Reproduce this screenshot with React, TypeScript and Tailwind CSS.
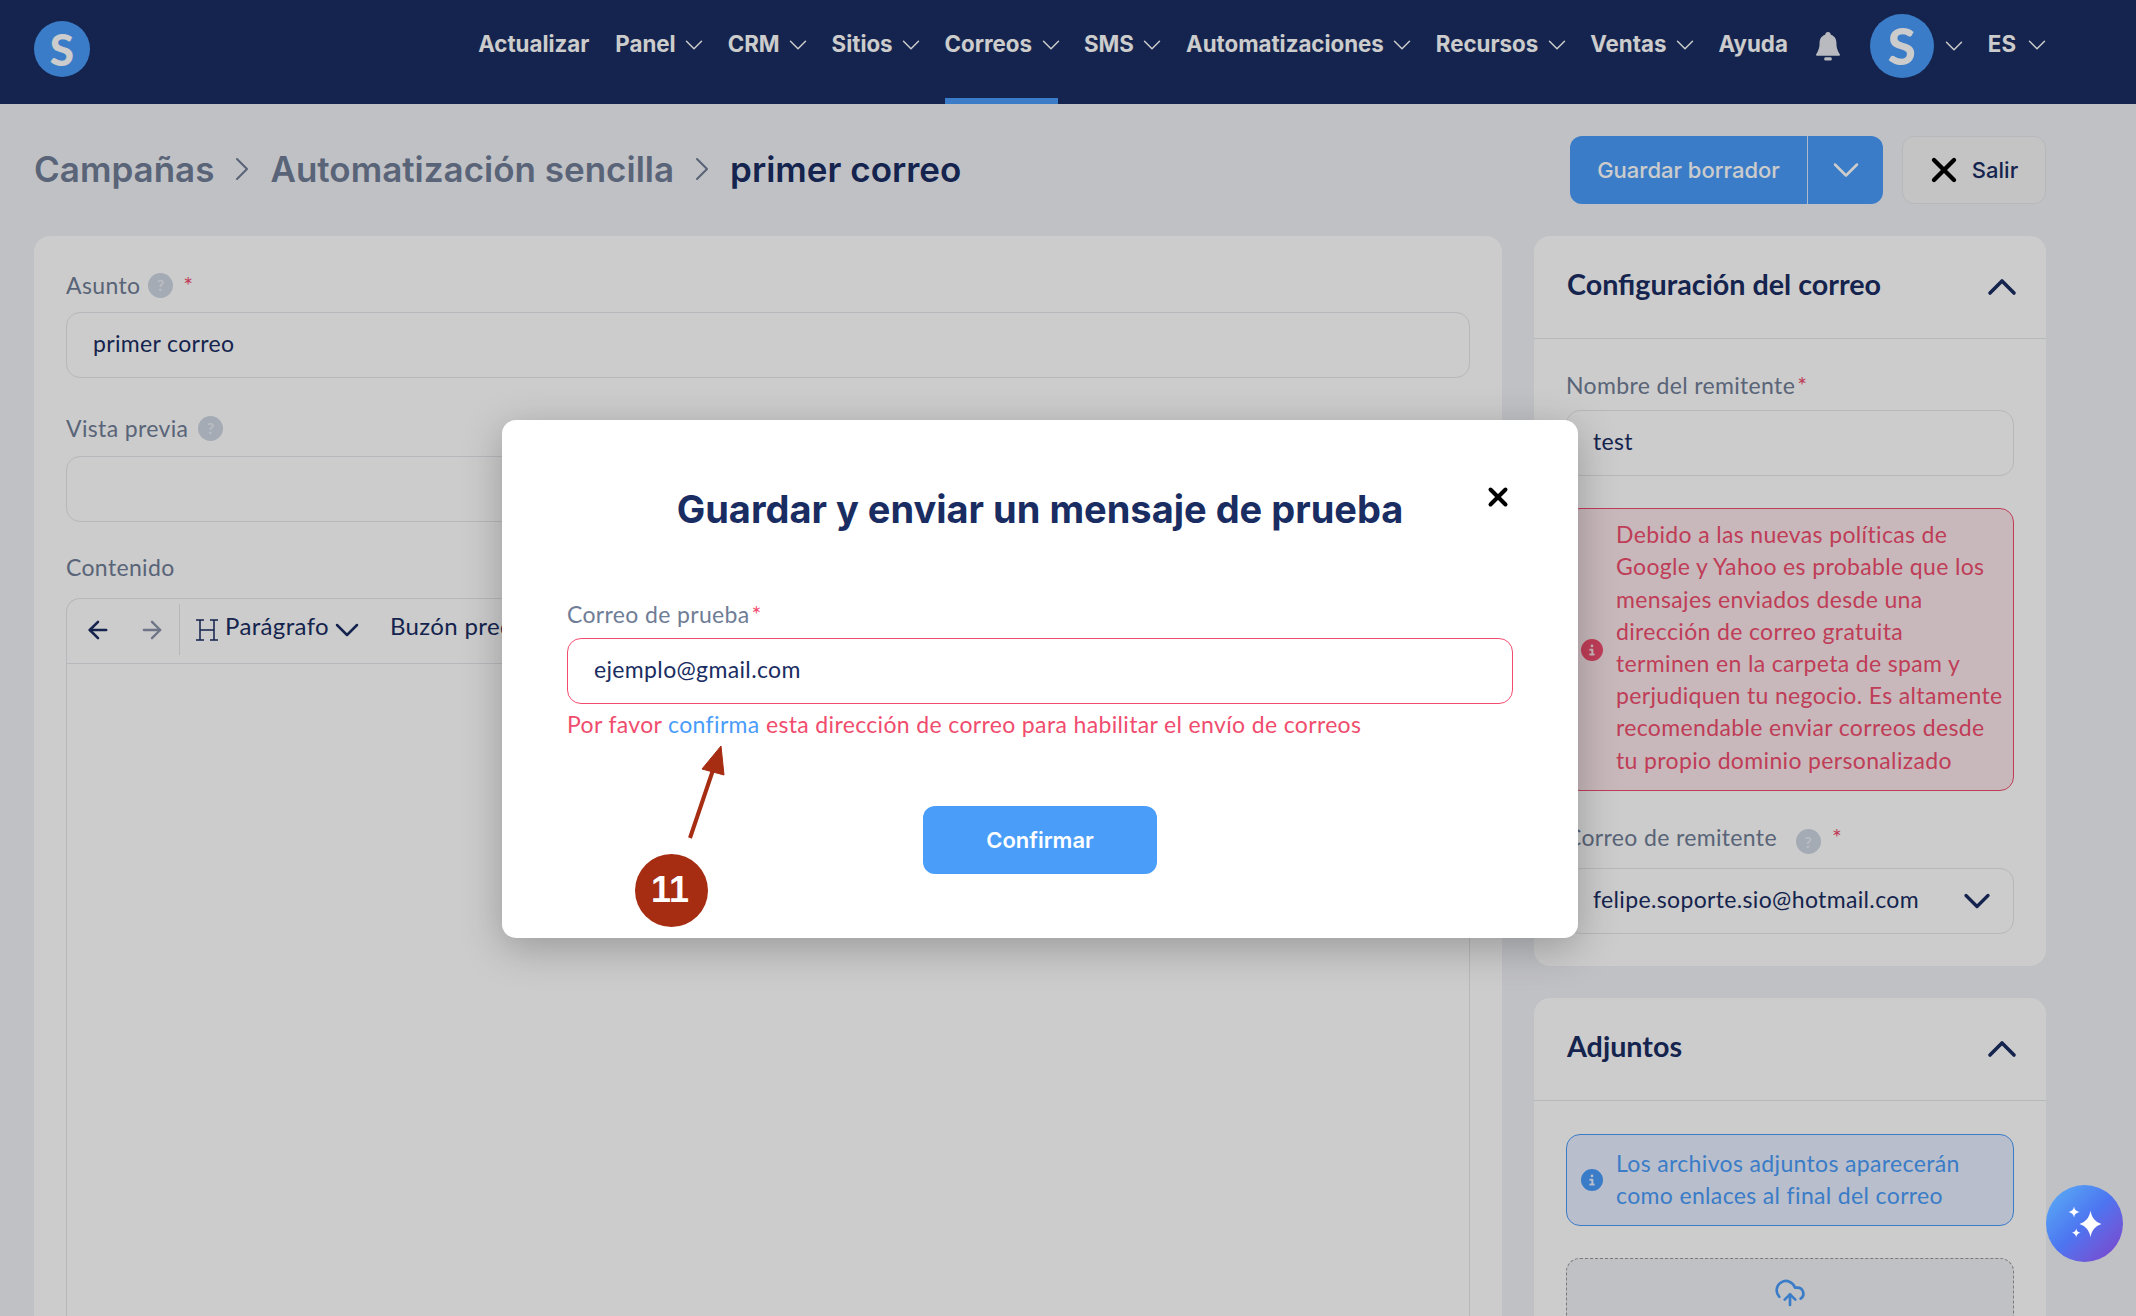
import { ArrowLeft, ArrowRight, ChevronDown, ChevronRight, ChevronUp, CloudUpload, X } from 'lucide-react';
import { FaCircleInfo } from 'react-icons/fa6';

const navItems = [
  { label: 'Actualizar', caret: false },
  { label: 'Panel', caret: true },
  { label: 'CRM', caret: true },
  { label: 'Sitios', caret: true },
  { label: 'Correos', caret: true, active: true },
  { label: 'SMS', caret: true },
  { label: 'Automatizaciones', caret: true },
  { label: 'Recursos', caret: true },
  { label: 'Ventas', caret: true },
  { label: 'Ayuda', caret: false },
];

const alertLines = [
  'Debido a las nuevas políticas de',
  'Google y Yahoo es probable que los',
  'mensajes enviados desde una',
  'dirección de correo gratuita',
  'terminen en la carpeta de spam y',
  'perjudiquen tu negocio. Es altamente',
  'recomendable enviar correos desde',
  'tu propio dominio personalizado',
];

function Help() {
  return (
    <span className="flex w-[25px] h-[25px] items-center justify-center rounded-full bg-[#cdd6e2] text-[16px] font-bold text-[#e8edf4]">?</span>
  );
}

function Star() {
  return <span className="ml-[2px] text-[#f04d6e]">*</span>;
}

function NavCaret({ className }: { className: string }) {
  return <ChevronDown className={`w-[30px] h-[30px] mx-[-7.5px] ${className}`} strokeWidth={1.2} />;
}

function Field({ value, children }: { value?: string; children?: React.ReactNode }) {
  return (
    <div className="flex h-[66px] items-center justify-between rounded-[14px] border border-[#e4e6ea] pl-[26px] pr-[25px] text-[#1a2d62]">
      <span className="pb-[3px]">{value}</span>
      {children}
    </div>
  );
}

function PanelHead({ title }: { title: string }) {
  return (
    <div className="flex h-[103px] items-center justify-between border-b border-[#e4e6ea] pl-[33px] pr-[32px]">
      <h2 className="pb-[4px] text-[28.700px] font-bold tracking-normal text-[#1a2d62]">{title}</h2>
      <ChevronUp className="w-[48px] h-[48px] mx-[-12px] text-[#1a2d62]" strokeWidth={1.8} />
    </div>
  );
}

function NavBar() {
  return (
    <header className="flex h-[104px] items-start bg-[#1a2d62] pl-[34px] pr-[92px] text-white">
      <div className="mt-[21px] flex w-[56px] h-[56px] items-center justify-center rounded-full bg-[#4a9cfa] text-[44px] font-black">S</div>
      <nav className="ml-auto flex items-start gap-[26px] font-['Inter',sans-serif] text-[22.300px] font-bold tracking-normal">
        {navItems.map((item) => (
          <div key={item.label} className={`flex h-[104px] items-start gap-[11px] pt-[27px] ${item.active ? 'border-b-[6px] border-[#4a9cfa]' : ''}`}>
            <span>{item.label}</span>
            {item.caret && <NavCaret className="mt-[3px]" />}
          </div>
        ))}
        <svg viewBox="0 0 28 32" className="mt-[31px] w-[28px] h-[30px] fill-[#e6e9ef]">
          <path d="M14 1c-2 0-3 1.500-3 3C6.500 5.500 5 9 5 13c0 6-2 9-3.500 11.500-.6 1 0 2 1 2h23c1 0 1.600-1 1-2C25 22 23 19 23 13c0-4-1.500-7.500-6-9 0-1.500-1-3-3-3z" />
          <rect x="10" y="28" width="8" height="3.500" rx="1.500" />
        </svg>
        <div className="ml-[2px] flex items-start gap-[13px]">
          <div className="mt-[14px] flex w-[64px] h-[64px] items-center justify-center rounded-full bg-[#4a9cfa] font-['Lato',sans-serif] text-[51px] font-black">S</div>
          <NavCaret className="mt-[31px]" />
        </div>
        <div className="flex items-start gap-[13px] pt-[27px]">
          <span>ES</span>
          <NavCaret className="mt-[3px]" />
        </div>
      </nav>
    </header>
  );
}

function TitleRow() {
  return (
    <div className="flex h-[132px] items-center justify-between pl-[34px] pr-[90px] font-['Inter',sans-serif] tracking-normal">
      <div className="flex items-center gap-[23px] pb-[2px] text-[35px] font-semibold text-[#707d96]">
        <span>Campañas</span>
        <ChevronRight className="w-[40px] h-[40px] mx-[-15px]" strokeWidth={1.25} />
        <span>Automatización sencilla</span>
        <ChevronRight className="w-[40px] h-[40px] mx-[-15px]" strokeWidth={1.25} />
        <span className="text-[#1a2d62]">primer correo</span>
      </div>
      <div className="flex items-center gap-[19px] text-[22px] font-medium">
        <div className="flex h-[68px] w-[313px] rounded-[12px] bg-[#4a9cfa] text-white">
          <span className="flex w-[238px] items-center justify-center border-r border-[#dbeafe]">Guardar borrador</span>
          <span className="flex flex-1 items-center justify-center">
            <ChevronDown className="w-[44px] h-[44px]" strokeWidth={1.4} />
          </span>
        </div>
        <div className="flex h-[68px] w-[144px] items-center justify-center gap-[18px] rounded-[12px] border border-[#e4e6ea] bg-[#f6f6f6] pl-[4px] text-[#1a2d62]">
          <X className="w-[40px] h-[40px] mx-[-10px] text-black" strokeWidth={2.6} />
          <span>Salir</span>
        </div>
      </div>
    </div>
  );
}

function Editor() {
  return (
    <div className="flex-1 rounded-t-[14px] border border-b-0 border-[#e4e6ea]">
      <div className="flex h-[65px] items-center border-b border-[#e4e6ea] pb-[3px] pl-[17px] text-[24px] text-[#1a2d62]">
        <ArrowLeft className="w-[28px] h-[28px]" strokeWidth={2.2} />
        <ArrowRight className="ml-[26px] w-[28px] h-[28px] text-[#8a93a8]" strokeWidth={2} />
        <div className="ml-[13px] h-[51px] w-px bg-[#e4e6ea]" />
        <svg viewBox="0 0 24 24" className="ml-[15px] w-[24px] h-[24px] fill-none stroke-[#1a2d62]" strokeWidth={1.5}>
          <path d="M5 2v20M19 2v20M5 12h14M1 2h8M15 2h8M1 22h8M15 22h8" />
        </svg>
        <span className="ml-[6px] pb-[7px]">Parágrafo</span>
        <ChevronDown className="ml-[-2px] mr-[-10px] w-[40px] h-[40px]" strokeWidth={1.5} />
        <span className="ml-[33px] whitespace-nowrap pb-[7px]">Buzón pred</span>
      </div>
    </div>
  );
}

function MainCard() {
  return (
    <section className="flex min-w-0 flex-1 flex-col rounded-t-[16px] bg-white px-[32px] pt-[36px] text-[#707d96]">
      <label className="flex items-center gap-[8px] leading-[26px]">
        Asunto
        <Help />
        <span className="ml-[2px] self-start text-[#f04d6e]">*</span>
      </label>
      <div className="mt-[14px]"><Field value="primer correo" /></div>
      <label className="mt-[37px] flex items-center gap-[10px] leading-[26px]">
        Vista previa
        <Help />
      </label>
      <div className="mt-[15px]"><Field /></div>
      <label className="mt-[32px] mb-[18px] leading-[26px]">Contenido</label>
      <Editor />
    </section>
  );
}

function SideColumn() {
  return (
    <aside className="flex w-[512px] shrink-0 flex-col gap-[32px]">
      <section className="rounded-[16px] bg-white pb-[32px]">
        <PanelHead title="Configuración del correo" />
        <div className="px-[32px] pt-[32px]">
          <label className="block leading-[28px] text-[#707d96]">Nombre del remitente<Star /></label>
          <div className="mt-[11px]"><Field value="test" /></div>
          <div className="mt-[32px] flex h-[283px] items-center gap-[13px] rounded-[14px] border border-[#f04d6e] bg-[#fae7eb] pl-[14px] text-[#f04d6e]">
            <FaCircleInfo className="w-[22px] h-[22px] shrink-0" />
            <p className="whitespace-nowrap pb-[5px] leading-[32.2px]">
              {alertLines.map((line) => (
                <span key={line} className="block">{line}</span>
              ))}
            </p>
          </div>
          <label className="mt-[32px] flex items-start leading-[28px] text-[#707d96]">
            Correo de remitente
            <span className="ml-[19px] mt-[6px]"><Help /></span>
            <span className="ml-[11px] text-[#f04d6e]">*</span>
          </label>
          <div className="mt-[14px]">
            <Field value="felipe.soporte.sio@hotmail.com">
              <ChevronDown className="w-[44px] h-[44px] mx-[-11px] text-[#1a2d62]" strokeWidth={1.8} />
            </Field>
          </div>
        </div>
      </section>
      <section className="flex-1 rounded-t-[16px] bg-white">
        <PanelHead title="Adjuntos" />
        <div className="px-[32px] pt-[33px]">
          <div className="flex h-[92px] items-center gap-[13px] rounded-[14px] border border-[#4a9cfa] bg-[#e6eefe] pl-[14px] text-[#4a9cfa]">
            <FaCircleInfo className="w-[22px] h-[22px] shrink-0" />
            <p className="whitespace-nowrap pb-[2px] leading-[32px]">
              <span className="block">Los archivos adjuntos aparecerán</span>
              <span className="block">como enlaces al final del correo</span>
            </p>
          </div>
          <div className="mt-[32px] flex h-[120px] justify-center rounded-[14px] border border-dashed border-[#999] bg-[#f0f2f7] pt-[18px]">
            <CloudUpload className="w-[32px] h-[32px] text-[#4a9cfa]" strokeWidth={2} />
          </div>
        </div>
      </section>
    </aside>
  );
}

function TestMailModal() {
  return (
    <div className="absolute left-[502px] top-[420px] h-[518px] w-[1076px] rounded-[14px] bg-white px-[65px] pt-[63px] shadow-[0_10px_40px_rgba(0,0,0,0.25)]">
      <h1 className="text-center font-['Inter',sans-serif] text-[38px] font-bold leading-[52px] tracking-normal text-[#1a2d62]">Guardar y enviar un mensaje de prueba</h1>
      <X className="absolute right-[65px] top-[62px] w-[30px] h-[30px] text-black" strokeWidth={3.2} />
      <label className="mt-[64px] block leading-[30px] text-[#707d96]">Correo de prueba<Star /></label>
      <div className="mt-[9px] flex h-[66px] items-center rounded-[14px] border border-[#f04d6e] pb-[4px] pl-[26px] text-[#1a2d62]">ejemplo@gmail.com</div>
      <p className="mt-[5px] leading-[30px] text-[#f04d6e]">
        Por favor <span className="text-[#4a9cfa]">confirma</span> esta dirección de correo para habilitar el envío de correos
      </p>
      <div className="mt-[67px] flex justify-center">
        <div className="flex h-[68px] w-[234px] items-center justify-center rounded-[12px] bg-[#4a9efa] font-['Inter',sans-serif] text-[22px] font-semibold tracking-normal text-white">Confirmar</div>
      </div>
      <svg viewBox="0 0 60 100" className="absolute left-[178px] top-[322px] w-[60px] h-[100px] fill-[#a62c12] stroke-[#a62c12]">
        <path d="M10 96 L33 28" strokeWidth="4" fill="none" />
        <path d="M41 4 L22 27 L44 33 Z" strokeWidth="1" />
      </svg>
      <div className="absolute left-[133px] top-[434px] flex w-[73px] h-[73px] items-center justify-center rounded-full bg-[#a62c12] pr-[3px] pb-[2px] font-['Liberation_Sans',sans-serif] text-[36px] font-bold tracking-normal text-white">11</div>
    </div>
  );
}

export default function App() {
  return (
    <div className="relative flex h-[1316px] flex-col overflow-hidden bg-[#f0f2f7] font-['Lato',sans-serif] text-[23px] tracking-[0.35px]">
      <NavBar />
      <TitleRow />
      <main className="flex min-h-0 flex-1 gap-[32px] pl-[34px] pr-[90px]">
        <MainCard />
        <SideColumn />
      </main>
      <div className="absolute inset-0 bg-black/20" />
      <TestMailModal />
      <div className="absolute left-[2046px] top-[1185px] flex w-[77px] h-[77px] items-center justify-center rounded-full bg-linear-to-br from-[#5cb0f5] via-[#4d74f0] to-[#7a3fc8]">
        <svg viewBox="0 0 40 40" className="w-[44px] h-[44px] fill-white">
          <path d="M25 8c1 6 4 10 10 12-6 2-9 6-10 12-1-6-4-10-10-12 6-2 9-6 10-12z" />
          <path d="M10 4c.5 3 2 4.500 5 5-3 .5-4.500 2-5 5-.5-3-2-4.500-5-5 3-.5 4.500-2 5-5z" />
          <path d="M12 24c.5 2.500 1.500 3.500 4 4-2.500.5-3.500 1.500-4 4-.5-2.500-1.500-3.500-4-4 2.500-.5 3.500-1.500 4-4z" />
        </svg>
      </div>
    </div>
  );
}
